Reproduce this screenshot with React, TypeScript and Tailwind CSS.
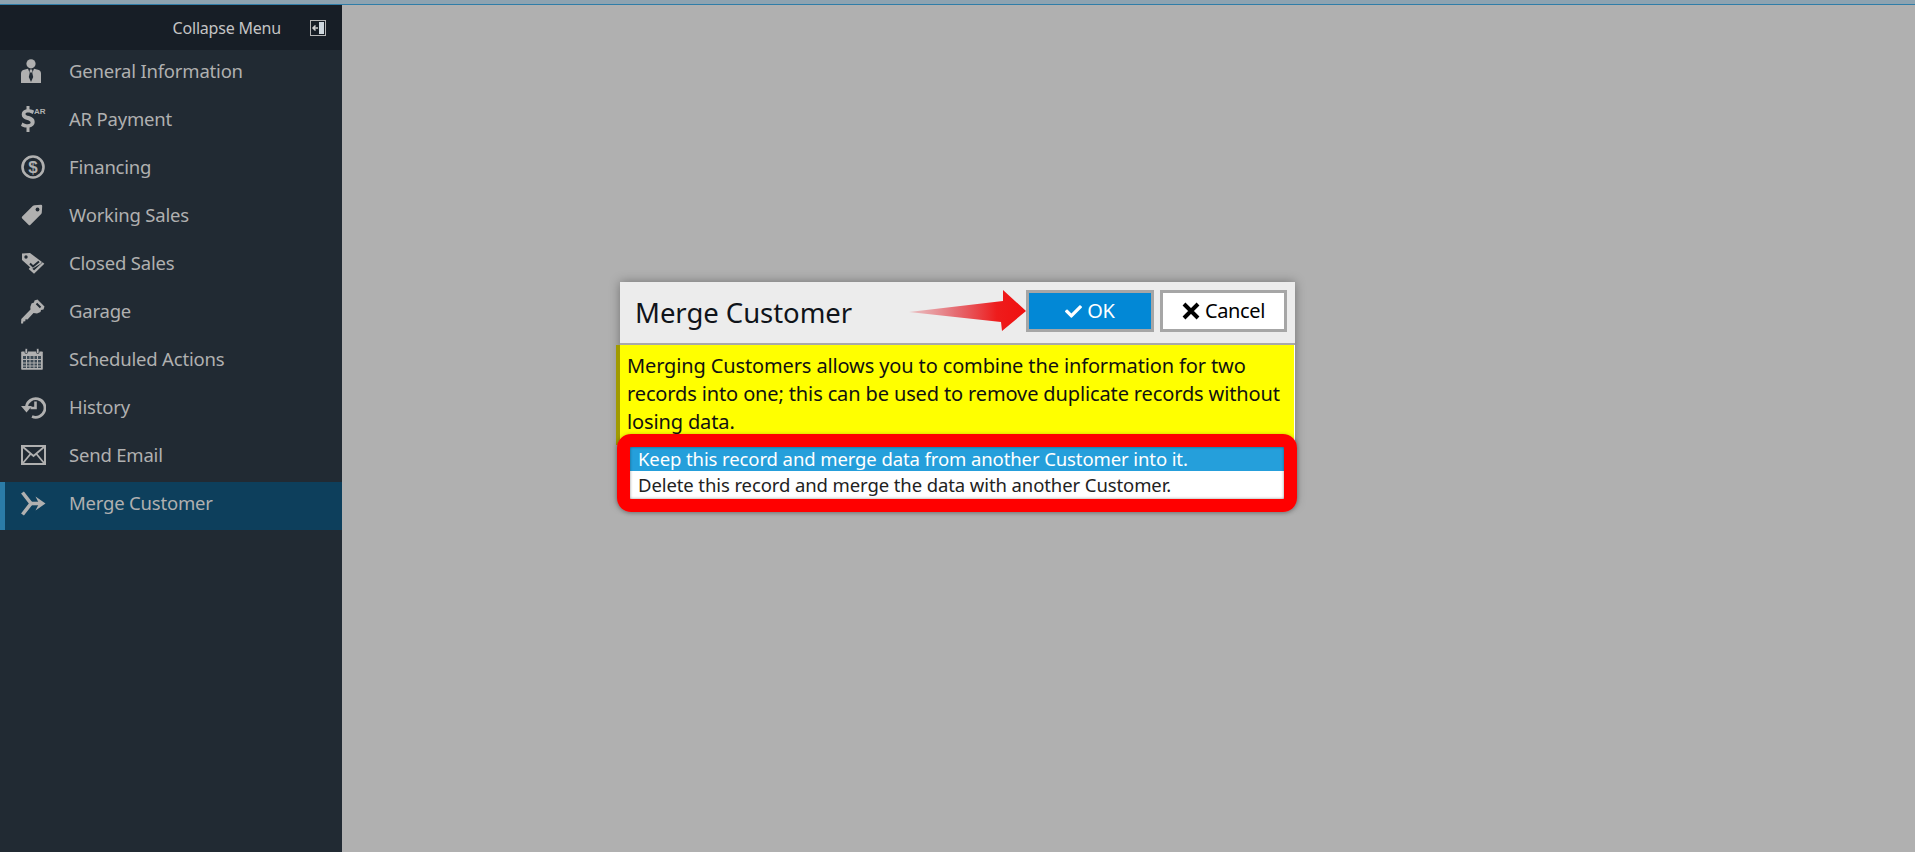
import React from "react";
import { FaCheck } from "react-icons/fa";

const g = "#b0b0b0";
const bg = "#212a33";
const Person = () => (
  <svg width="20" height="24" viewBox="0 0 20 24"><circle cx="10" cy="4.800" r="4.600" fill={g} /><path d="M0 24V14.500Q0 11 4 10.500L7 9.800 8.700 14 7.800 18 10 23 12.200 18 11.300 14 13 9.800 16 10.500Q20 11 20 14.500V24Z" fill={g} /><path d="M9 10.500h2l.6 3h-3.200z" fill={g} /></svg>
);
const Dollar = () => (
  <span className="relative flex w-[26px] h-[26px] items-center">
    <svg width="14" height="26" viewBox="0 0 14 26"><path d="M5.500 0h3v3.200c2 .2 3.600.8 4.600 1.500l-1.300 3.300C10.500 7.100 8.800 6.500 7 6.500c-1.700 0-2.500.6-2.500 1.400 0 1 1.100 1.400 3.500 2.200 3.600 1.200 5.700 2.700 5.700 5.800 0 2.800-2 5-5.200 5.500V26h-3v-4.400c-2.200-.2-4.200-.9-5.500-1.900l1.400-3.300c1.400 1 3.500 1.800 5.400 1.800 1.800 0 2.800-.7 2.800-1.700 0-1-1-1.600-3.300-2.400C2.900 12.900.7 11.400.7 8.400c0-2.600 1.900-4.700 4.800-5.200z" fill={g} /></svg>
    <span className="absolute left-[13px] top-[1px] text-[8px] leading-[10px] font-bold text-[#b0b0b0] font-['Liberation_Sans',sans-serif]">AR</span>
  </span>
);
const CircleDollar = () => (
  <svg width="24" height="24" viewBox="0 0 24 24"><circle cx="12" cy="12" r="10.500" fill="none" stroke={g} strokeWidth="2.600" /><text x="12" y="18" textAnchor="middle" fontSize="17" fontWeight="700" fontFamily="'Liberation Sans', sans-serif" fill={g}>$</text></svg>
);
const Tag = () => (
  <svg width="22" height="22" viewBox="0 0 22 22"><path d="M13.500 1.200 20 .8q1.200 0 1.200 1.200l-.4 6.500q0 .8-.6 1.400L9.500 20.800q-1 1-2 0L1.200 14.500q-1-1 0-2L12 1.800q.7-.6 1.500-.6z" fill={g} /><circle cx="16.500" cy="5.500" r="1.900" fill={bg} /></svg>
);
const ClosedTag = () => (
  <svg width="24" height="22" viewBox="0 0 24 22"><path d="M1 1.500 9 1l12 9-1.500 1.800L11 17 1 8Z" fill={g} /><circle cx="5" cy="5" r="1.700" fill={bg} /><path d="M8.500 16l4.500 4 9.500-9" fill="none" stroke={g} strokeWidth="2.400" /><path d="M9 11.500l3 3 6-5" fill="none" stroke={bg} strokeWidth="2" /></svg>
);
const Key = () => (
  <svg width="24" height="25" viewBox="0 0 24 25"><path d="M16.500 0.500 23.500 7.500 22.500 10.500 20 11 19.500 13 16 14.500 12.500 14 6.500 20.500 4.500 20.300 4.300 22.300 2.300 22.500 2.100 24.500H0L.3 20 9.500 10.500 9.300 8 10.500 4.500 13 3.500 13.500 1.500zM16.200 3.800 14.800 5.200 18.800 9.200 20.200 7.800z" fill={g} fillRule="evenodd" /></svg>
);
const Calendar = () => (
  <svg width="22" height="22" viewBox="0 0 22 22"><rect x="0.200" y="3.500" width="21.600" height="18.300" rx=".8" fill={g} /><rect x="4" y="0.500" width="2.500" height="5" rx="1" fill={g} stroke={bg} strokeWidth=".7" /><rect x="15.500" y="0.500" width="2.500" height="5" rx="1" fill={g} stroke={bg} strokeWidth=".7" /><path d="M2 8h18v12H2z" fill="#3d4a55" /><path d="M2 11.500h18M2 15h18M2 18h18M5.500 8v12M9 8v12M13 8v12M16.500 8v12" stroke={g} strokeWidth="1" /></svg>
);
const History = () => (
  <svg width="25" height="23" viewBox="0 0 25 23"><path d="M5.500 10.500A9.300 9.300 0 1 1 11 20.500" fill="none" stroke={g} strokeWidth="2.800" /><path d="M0 10h11l-5.500 6.500z" fill={g} /><path d="M14.500 5.500v6.500h-5" fill="none" stroke={g} strokeWidth="2.600" /></svg>
);
const Mail = () => (
  <svg width="25" height="20" viewBox="0 0 25 20"><rect x="1" y="1" width="23" height="18" fill="none" stroke={g} strokeWidth="2" /><path d="M2 2l10.500 9L23 2M2 18l7.500-9M23 18l-7.500-9" fill="none" stroke={g} strokeWidth="1.800" /></svg>
);
const Merge = () => (
  <svg width="25" height="25" viewBox="0 0 25 25"><path d="M1.500 1.500 10 12.500 1.500 23.500" fill="none" stroke={g} strokeWidth="3.600" /><path d="M9 12.500h11" stroke={g} strokeWidth="3.600" /><path d="M14.500 5.500 24.500 12.500 14.500 19.500 18 12.500z" fill={g} /></svg>
);

const items: [string, React.ReactNode][] = [
  ["General Information", <Person />],
  ["AR Payment", <Dollar />],
  ["Financing", <CircleDollar />],
  ["Working Sales", <Tag />],
  ["Closed Sales", <ClosedTag />],
  ["Garage", <Key />],
  ["Scheduled Actions", <Calendar />],
  ["History", <History />],
  ["Send Email", <Mail />],
  ["Merge Customer", <Merge />],
];

export default function App() {
  return (
    <div className="flex flex-col h-[852px] w-[1915px] overflow-hidden bg-[#b0b0b0] font-['Noto_Sans','Open_Sans',sans-serif]">
      <div className="h-[5px] shrink-0 bg-[#8ea3b0] border-b border-[#2f7da8]" />
      <div className="flex flex-1 min-h-0">
        <aside className="w-[342px] shrink-0 bg-[#212a33] text-[#b0b0b0]">
          <div className="h-[45px] bg-[#171e26] flex items-center justify-end gap-[29px] pr-[16px] text-[#c4c4c4]">
            <span className="text-[16px] -tracking-[0.2px]">Collapse Menu</span>
            <svg width="16" height="16" viewBox="0 0 16 16">
              <rect x="0.500" y="0.500" width="15" height="15" fill="#171e26" stroke="#b5b5b5" />
              <rect x="9" y="2" width="5" height="12" fill="#cfd8de" />
              <path d="M8 8H3.500M5.500 5.500 3 8l2.500 2.500" fill="none" stroke="#d0d0d0" strokeWidth="1.500" />
            </svg>
          </div>
          {items.map(([label, icon]) => {
            const active = label === "Merge Customer";
            return (
              <div key={label} className={`h-[48px] pb-[6px] flex items-center ${active ? "bg-[#0d3f5c] border-l-[5px] border-[#2b7ca8] pl-[16px]" : "pl-[21px]"}`}>
                <span className="w-[48px] flex items-center">{icon}</span>
                <span className="text-[18.500px] -tracking-[0.2px] whitespace-nowrap">{label}</span>
              </div>
            );
          })}
        </aside>
        <main className="flex-1 pl-[278px] pt-[277px]">
          <div className="relative w-[675px] shadow-[0_0_10px_rgba(0,0,0,0.35)] bg-white">
            <div className="h-[63px] bg-[#ececec] border-b-2 border-[#a9a9a9] flex items-center pl-[15px] pr-[8px] justify-between">
              <span className="text-[27.500px] mt-[1px] -tracking-[0.05px] text-[#10141a] whitespace-nowrap">Merge Customer</span>
              <div className="flex gap-[6px] -mt-[3px]">
                <button className="w-[128px] h-[42px] bg-[#0288d6] border-[3px] border-[#a6a6a6] text-white text-[20px] flex items-center justify-center gap-[5px] -tracking-[0.2px]">
                  <FaCheck size={17} />OK
                </button>
                <button className="w-[127px] h-[42px] bg-white border-[3px] border-[#a6a6a6] text-black text-[20px] flex items-center justify-center gap-[5px] -tracking-[0.4px]">
                  <svg width="18" height="18" viewBox="0 0 18 18"><path d="M2 2 16 16M16 2 2 16" stroke="#000" strokeWidth="4" /></svg>Cancel
                </button>
              </div>
            </div>
            <div className="bg-[#ffff00] h-[102px] mr-[1px] px-[7px] pt-[7px] text-[20px] leading-[28px] -tracking-[0.13px] text-[#111]">
              Merging Customers allows you to combine the information for two records into one; this can be used to remove duplicate records without losing data.
            </div>
            <div className="mx-[10px] pb-[4px] bg-white text-[18.500px] leading-[24px] -tracking-[0.1px]">
              <div className="h-[24px] bg-[#259fdb] text-white pl-[8px] whitespace-nowrap">Keep this record and merge data from another Customer into it.</div>
              <div className="h-[29px] bg-white text-[#222] pl-[8px] pt-[2px] whitespace-nowrap">Delete this record and merge the data with another Customer.</div>
            </div>
            <div className="absolute left-[-4px] top-[63px] w-[4px] h-[100px] bg-[#a09a00]" />
            <div className="absolute left-[-3px] right-[-2px] top-[152px] h-[78px] border-[13px] border-[#ff0000] rounded-[14px] pointer-events-none shadow-[0_1px_4px_rgba(0,0,0,0.35),inset_0_0_3px_rgba(0,0,0,0.45)]" />
            <svg className="absolute left-[289px] top-[8px]" width="118" height="42" viewBox="0 0 118 42">
              <defs>
                <linearGradient id="arrowFill" x1="0" x2="1" y1="0" y2="0">
                  <stop offset="0" stopColor="#e8a0a5" stopOpacity="0.6" />
                  <stop offset="0.4" stopColor="#e4555c" stopOpacity="0.85" />
                  <stop offset="0.75" stopColor="#ee1c1c" />
                  <stop offset="1" stopColor="#f01010" />
                </linearGradient>
              </defs>
              <path d="M0 22 94 11 94 0 117 21 93 41 92 32Z" fill="url(#arrowFill)" />
            </svg>
          </div>
        </main>
      </div>
    </div>
  );
}
